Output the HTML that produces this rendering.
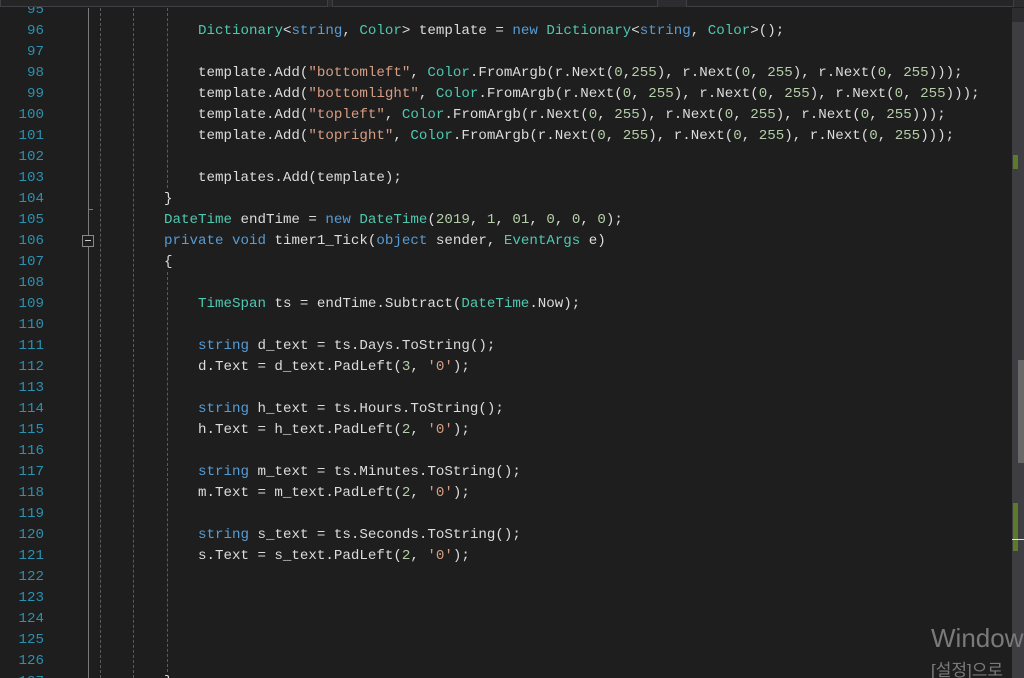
<!DOCTYPE html>
<html style="overflow:hidden"><head><meta charset="utf-8"><style>
html,body{margin:0;width:1024px;height:678px;overflow:hidden}
body{background:#1e1e1e;position:relative;font-family:"Liberation Mono",monospace}
.top{position:absolute;left:0;top:0;width:1024px;height:7px;background:#2d2d30}
.tab{position:absolute;top:0;height:6px;border:1px solid #3f3f46;border-top:none;background:#252526}
.ln{position:absolute;left:0;width:44px;text-align:right;color:#2b91af;font-size:14.17px;line-height:21px}
.code{position:absolute;left:164px;font-size:14.17px;line-height:21px;color:#dcdcdc;white-space:pre}
.t{color:#4ec9b0}.k{color:#569cd6}.s{color:#d69d85}.n{color:#b5cea8}
.dash{position:absolute;top:8px;height:670px;width:0;border-left:1px dashed #5a5a5a}
.sb{position:absolute;left:1012px;top:8px;width:12px;height:670px;background:#3e3e42}
</style></head><body>
<div class="ln" style="top:0px">95<br>96<br>97<br>98<br>99<br>100<br>101<br>102<br>103<br>104<br>105<br>106<br>107<br>108<br>109<br>110<br>111<br>112<br>113<br>114<br>115<br>116<br>117<br>118<br>119<br>120<br>121<br>122<br>123<br>124<br>125<br>126<br>127</div>
<div style="position:absolute;left:88px;top:8px;width:1px;height:670px;background:#7a7a7a"></div>
<div style="position:absolute;left:88px;top:209px;width:5px;height:1px;background:#7a7a7a"></div>
<div style="position:absolute;left:82px;top:235px;width:10px;height:10px;border:1px solid #8a8a8a;background:#1e1e1e"><div style="position:absolute;left:2px;top:4px;width:6px;height:1px;background:#ccc"></div></div>
<div class="dash" style="left:100px"></div>
<div class="dash" style="left:133px"></div>
<div class="dash" style="left:167px;top:8px;height:180px"></div>
<div class="dash" style="left:167px;top:272px;height:400px"></div>
<div class="code" style="top:0px">
    <span class="t">Dictionary</span>&lt;<span class="k">string</span>, <span class="t">Color</span>&gt; template = <span class="k">new</span> <span class="t">Dictionary</span>&lt;<span class="k">string</span>, <span class="t">Color</span>&gt;();

    template.Add(<span class="s">"bottomleft"</span>, <span class="t">Color</span>.FromArgb(r.Next(<span class="n">0</span>,<span class="n">255</span>), r.Next(<span class="n">0</span>, <span class="n">255</span>), r.Next(<span class="n">0</span>, <span class="n">255</span>)));
    template.Add(<span class="s">"bottomlight"</span>, <span class="t">Color</span>.FromArgb(r.Next(<span class="n">0</span>, <span class="n">255</span>), r.Next(<span class="n">0</span>, <span class="n">255</span>), r.Next(<span class="n">0</span>, <span class="n">255</span>)));
    template.Add(<span class="s">"topleft"</span>, <span class="t">Color</span>.FromArgb(r.Next(<span class="n">0</span>, <span class="n">255</span>), r.Next(<span class="n">0</span>, <span class="n">255</span>), r.Next(<span class="n">0</span>, <span class="n">255</span>)));
    template.Add(<span class="s">"topright"</span>, <span class="t">Color</span>.FromArgb(r.Next(<span class="n">0</span>, <span class="n">255</span>), r.Next(<span class="n">0</span>, <span class="n">255</span>), r.Next(<span class="n">0</span>, <span class="n">255</span>)));

    templates.Add(template);
}
<span class="t">DateTime</span> endTime = <span class="k">new</span> <span class="t">DateTime</span>(<span class="n">2019</span>, <span class="n">1</span>, <span class="n">01</span>, <span class="n">0</span>, <span class="n">0</span>, <span class="n">0</span>);
<span class="k">private</span> <span class="k">void</span> timer1_Tick(<span class="k">object</span> sender, <span class="t">EventArgs</span> e)
{

    <span class="t">TimeSpan</span> ts = endTime.Subtract(<span class="t">DateTime</span>.Now);

    <span class="k">string</span> d_text = ts.Days.ToString();
    d.Text = d_text.PadLeft(<span class="n">3</span>, <span class="s">'0'</span>);

    <span class="k">string</span> h_text = ts.Hours.ToString();
    h.Text = h_text.PadLeft(<span class="n">2</span>, <span class="s">'0'</span>);

    <span class="k">string</span> m_text = ts.Minutes.ToString();
    m.Text = m_text.PadLeft(<span class="n">2</span>, <span class="s">'0'</span>);

    <span class="k">string</span> s_text = ts.Seconds.ToString();
    s.Text = s_text.PadLeft(<span class="n">2</span>, <span class="s">'0'</span>);





}</div>
<div class="top"><div class="tab" style="left:0;width:326px"></div><div class="tab" style="left:332px;width:324px"></div><div class="tab" style="left:686px;width:326px"></div></div>
<div class="sb"></div>
<div style="position:absolute;left:1012px;top:8px;width:12px;height:14px;background:#2d2d30"></div>
<div style="position:absolute;left:1018px;top:360px;width:6px;height:103px;background:#686868"></div>
<div style="position:absolute;left:1013px;top:155px;width:5px;height:14px;background:#5b7a2a"></div>
<div style="position:absolute;left:1013px;top:503px;width:5px;height:48px;background:#5b7a2a"></div>
<div style="position:absolute;left:1012px;top:539px;width:12px;height:1px;background:#e0e0e0"></div>
<div style="position:absolute;left:931px;top:623px;font-family:'Liberation Sans',sans-serif;font-size:26px;color:#7a7a7a">Windows</div>
<div style="position:absolute;left:931px;top:656px;font-family:'Liberation Sans','Noto Sans CJK KR',sans-serif;font-size:17px;color:#7a7a7a">[설정]으로</div>
</body></html>
